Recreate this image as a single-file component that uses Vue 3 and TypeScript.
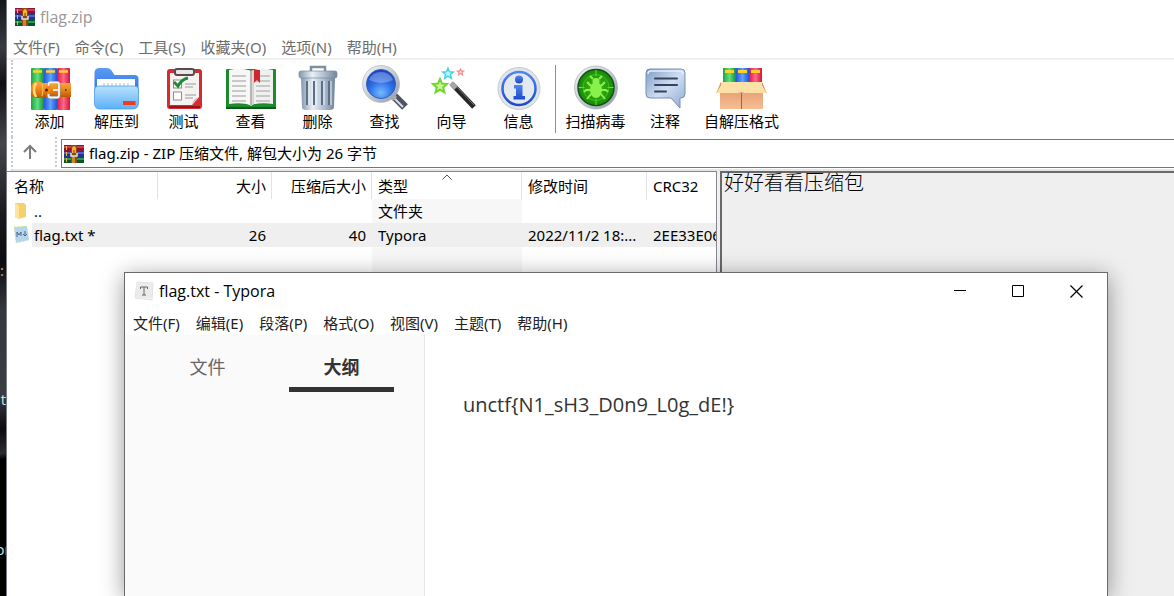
<script setup lang="ts">
interface Tool {
  id: string
  label: string
  size?: string
}

const archiveMenus: string[] = ['文件(F)', '命令(C)', '工具(S)', '收藏夹(O)', '选项(N)', '帮助(H)']
const editorMenus: string[] = ['文件(F)', '编辑(E)', '段落(P)', '格式(O)', '视图(V)', '主题(T)', '帮助(H)']

const tools: Tool[] = [
  { id: 'add', label: '添加' },
  { id: 'extract', label: '解压到' },
  { id: 'test', label: '测试' },
  { id: 'view', label: '查看' },
  { id: 'delete', label: '删除' },
  { id: 'find', label: '查找' },
  { id: 'wizard', label: '向导' },
  { id: 'info', label: '信息' },
  { id: 'scan', label: '扫描病毒', size: 'wide' },
  { id: 'comment', label: '注释', size: 'narrow' },
  { id: 'sfx', label: '自解压格式', size: 'widest' },
]

const address = 'flag.zip - ZIP 压缩文件, 解包大小为 26 字节'
const star = 'M0 -7 L2 -2.4 L7 -2 L3.2 1.4 L4.4 6.4 L0 3.6 L-4.4 6.4 L-3.2 1.4 L-7 -2 L-2 -2.4 Z'
</script>

<template>
  <div class="desktop">
    <svg class="defs" width="0" height="0" aria-hidden="true">
      <defs>
        <linearGradient id="gGreen"><stop offset="0" stop-color="#1fa345" /><stop offset=".5" stop-color="#5fe07c" /><stop offset="1" stop-color="#149038" /></linearGradient>
        <linearGradient id="gBlue"><stop offset="0" stop-color="#2559d8" /><stop offset=".5" stop-color="#5fa2ff" /><stop offset="1" stop-color="#1f55d6" /></linearGradient>
        <linearGradient id="gRed"><stop offset="0" stop-color="#e01540" /><stop offset=".5" stop-color="#ff6a86" /><stop offset="1" stop-color="#d9123a" /></linearGradient>
        <linearGradient id="gBelt" x2="0" y2="1"><stop offset="0" stop-color="#f7a93c" /><stop offset=".5" stop-color="#ec8416" /><stop offset="1" stop-color="#b85a06" /></linearGradient>
        <linearGradient id="gFolderBack" x2="0" y2="1"><stop offset="0" stop-color="#5b9cf5" /><stop offset="1" stop-color="#2f6fe0" /></linearGradient>
        <linearGradient id="gFolder" x2="0" y2="1"><stop offset="0" stop-color="#b8e2fd" /><stop offset="1" stop-color="#5cb0f7" /></linearGradient>
        <linearGradient id="gPage"><stop offset="0" stop-color="#fff" /><stop offset="1" stop-color="#cfcfcf" /></linearGradient>
        <linearGradient id="gSteel"><stop offset="0" stop-color="#8496ae" /><stop offset=".35" stop-color="#e8eff7" /><stop offset=".7" stop-color="#a9b8cb" /><stop offset="1" stop-color="#71839b" /></linearGradient>
        <linearGradient id="gRing" x2="1" y2="1"><stop offset="0" stop-color="#f4f7fa" /><stop offset=".5" stop-color="#c3cbd5" /><stop offset="1" stop-color="#8d98a6" /></linearGradient>
        <radialGradient id="gLens" cx=".5" cy=".8" r=".8"><stop offset="0" stop-color="#72bcff" /><stop offset=".5" stop-color="#2e6fe6" /><stop offset="1" stop-color="#183db8" /></radialGradient>
        <linearGradient id="gInfo" x2="0" y2="1"><stop offset="0" stop-color="#4f86f2" /><stop offset="1" stop-color="#1f49cc" /></linearGradient>
        <linearGradient id="gBubble" x2="1" y2="1"><stop offset="0" stop-color="#7f9cc6" /><stop offset=".5" stop-color="#cfdef3" /><stop offset="1" stop-color="#8fa9cf" /></linearGradient>
        <linearGradient id="gBox" x2="0" y2="1"><stop offset="0" stop-color="#dc9468" /><stop offset="1" stop-color="#f8bd92" /></linearGradient>
        <radialGradient id="gScan"><stop offset="0" stop-color="#3cbf12" /><stop offset="1" stop-color="#188a08" /></radialGradient>
        <symbol id="archive" viewBox="0 0 20 18">
          <rect width="20" height="6" fill="#8e1238" /><rect y="1" width="20" height="2" fill="#c93a60" />
          <rect y="6" width="20" height="6" fill="#22358f" /><rect y="7" width="20" height="2" fill="#4f63c8" />
          <rect y="12" width="20" height="6" fill="#0a5428" /><rect y="13" width="20" height="2" fill="#2b9950" />
          <path d="M2.500 1v4M2.500 7v4M2.500 13v4" stroke="#efb72f" />
          <rect x="7" width="6" height="18" fill="#8f4a14" /><rect x="8" y="11" width="3" height="7" fill="#cf8430" />
          <path d="M8 3q2-4 4 0v5H8z" fill="#f6b42c" />
          <path d="M7 8v3h6V8" fill="none" stroke="#e3e0d8" stroke-width="1.500" />
          <path d="M10 5v5" stroke="#7a4210" />
        </symbol>
      </defs>
    </svg>

    <aside class="wallpaper">
      <span class="frag amber">:</span>
      <span class="frag">t</span>
      <span class="frag low">or</span>
    </aside>

    <main class="archive">
      <header class="titlebar">
        <svg class="app-icon" width="20" height="18"><use href="#archive" /></svg>
        <span>flag.zip</span>
      </header>

      <nav class="menubar">
        <button v-for="m in archiveMenus" :key="m" type="button">{{ m }}</button>
      </nav>

      <div class="toolbar">
        <button v-for="t in tools" :key="t.id" type="button" class="tool" :class="[t.size, t.id]">
          <svg width="52" height="46" viewBox="-1 -1 52 46" aria-hidden="true">
            <g v-if="t.id === 'add'">
              <rect x="6" y="2" width="13" height="42" rx="1" fill="url(#gGreen)" />
              <rect x="19" y="2" width="13" height="42" rx="1" fill="url(#gBlue)" />
              <rect x="32" y="2" width="13" height="42" rx="1" fill="url(#gRed)" />
              <path d="M8 5.500h9M21 5.500h9M34 5.500h9" stroke="#ffd02e" stroke-width="2.500" />
              <rect x="16" y="17" width="30" height="14" fill="url(#gBelt)" />
              <path d="M10 16h6q3 0 3 8t-3 8h-6q-4-1-4-8t4-8z" fill="url(#gBelt)" />
              <path d="M11 17q-4 7 0 14" fill="none" stroke="#ffd977" stroke-width="2.500" />
              <path d="M17 18q2 6 0 12" fill="none" stroke="#ffc45a" stroke-width="1" />
              <rect x="23.500" y="16.500" width="10.500" height="15" rx="2" fill="none" stroke="#8b8f96" stroke-width="3" />
              <rect x="23.500" y="16.500" width="10.500" height="15" rx="2" fill="none" stroke="#f3f3f3" stroke-width="1.800" />
              <rect x="22" y="20" width="3" height="8" fill="#ec8416" />
              <path d="M28 24h6" stroke="#f3f3f3" stroke-width="1.800" /><circle cx="21.500" cy="24" r="1.500" fill="#4a2502" />
              <path d="M40 24h1.500" stroke="#6b3503" stroke-width="2" />
            </g>
            <g v-else-if="t.id === 'extract'">
              <path d="M2.500 22V7q0-5 5-5h7q4 0 6 4l2 3h20q4 0 4 4v14H2.500z" fill="url(#gFolderBack)" />
              <path d="M5 13h38v12H5z" fill="#fff" />
              <path d="M12 17v4M16 17v4M20 17v4M24 17v4M28 17v4M32 17v4M36 17v4" stroke="#b9c3cf" />
              <path d="M2.500 24q0-4 4-4h36q4 0 4 4v13q0 6-6 6H8q-5.500 0-5.500-6z" fill="url(#gFolder)" stroke="#4d9cee" stroke-width=".8" />
              <rect x="31" y="35" width="12.500" height="4" fill="#ee3b22" />
            </g>
            <g v-else-if="t.id === 'test'">
              <rect x="8" y="3" width="35" height="40" rx="3" fill="#d52c32" />
              <path d="M10 41h31" stroke="#951318" stroke-width="2" />
              <path d="M11 7h29v24l-7 8H11z" fill="#f4f3f1" /><path d="M33 39q1-7 7-8z" fill="#c9c6c2" />
              <rect x="16" y="3" width="19" height="6" rx="2" fill="#e8e8e8" stroke="#5b4a4c" stroke-width="2" />
              <rect x="14.500" y="14" width="8" height="8" fill="#fff" stroke="#8d8d8d" />
              <rect x="14.500" y="26" width="8" height="8" fill="#fff" stroke="#8d8d8d" />
              <path d="M26 18h11M26 21h8M26 29h11M26 32h8" stroke="#a5979a" />
              <path d="M15 16l4 4q4-7 10-8" fill="none" stroke="#23873a" stroke-width="3" />
            </g>
            <g v-else-if="t.id === 'view'">
              <rect x="0" y="3" width="50" height="40" rx="1" fill="#1d8a2d" />
              <path d="M0 42h50" stroke="#0c5d1a" stroke-width="2" />
              <path d="M3 4q12-3 22 1v34q-10-3-22-1z" fill="#f7f7f7" />
              <path d="M25 5q10-4 22-1v34q-12-2-22 1z" fill="#f0f0f0" />
              <path d="M22 4l3 1 3-1v34l-3 2-3-2z" fill="url(#gPage)" />
              <path d="M25 5v34" stroke="#858585" />
              <path d="M6 10h14M6 15h14M6 20h14M6 25h14M6 30h14M6 35h14M30 10h14M30 15h14M30 20h14M30 25h14M30 30h14M30 35h14" stroke="#bbb" stroke-width="1.500" />
              <path d="M28 4h6v13l-3-3-3 3z" fill="#cf2730" />
            </g>
            <g v-else-if="t.id === 'delete'">
              <path d="M18 6V1h14v5" fill="none" stroke="#8090a4" stroke-width="2.500" />
              <path d="M8 12h34l-1 29q0 3-4 3H13q-4 0-4-3z" fill="url(#gSteel)" />
              <path d="M14 15v24M21 15v24M29 15v24M36 15v24" stroke="#5d6f87" stroke-width="2" />
              <path d="M16 15v24M23 15v24M31 15v24M38 15v24" stroke="#eef4fb" />
              <rect x="6" y="5" width="38" height="7" rx="2" fill="url(#gSteel)" stroke="#788aa1" stroke-width=".7" />
            </g>
            <g v-else-if="t.id === 'find'">
              <path d="M34 30L45 41" stroke="#4e535f" stroke-width="8" /><path d="M34 32l9 9" stroke="#d9dde5" stroke-width="2" />
              <path d="M31 29l4 4" stroke="#9da5b1" stroke-width="6" />
              <circle cx="21" cy="18" r="18.500" fill="url(#gRing)" stroke="#aeb7c2" stroke-width=".7" />
              <circle cx="21" cy="18" r="14.500" fill="url(#gLens)" stroke="#345cc0" />
              <path d="M9 14Q12 6 21 6t12 8Q21 20 9 14z" fill="#fff" opacity=".28" />
            </g>
            <g v-else-if="t.id === 'wizard'">
              <path d="M25 18L47 41" stroke="#272727" stroke-width="5" /><path d="M26 17l21 22" stroke="#777" />
              <path d="M24 17l5 5" stroke="#a6a6a6" stroke-width="5" />
              <path :d="star" transform="translate(13 20)" fill="#c5f59a" stroke="#73d62d" stroke-width="2" />
              <path :d="star" transform="translate(21 7.500) scale(.75)" fill="#c4f7ff" stroke="#43d1ec" stroke-width="2" />
              <path :d="star" transform="translate(33.500 6) scale(.45)" fill="#ffdada" stroke="#f58a8a" stroke-width="2.500" />
            </g>
            <g v-else-if="t.id === 'info'">
              <circle cx="25" cy="22.500" r="21" fill="#dfe4ea" stroke="#c3cad2" />
              <circle cx="25" cy="22.500" r="16.500" fill="#e4e9f0" stroke="url(#gInfo)" stroke-width="2.500" />
              <circle cx="25" cy="13.500" r="4" fill="url(#gInfo)" />
              <path d="M20 19h8.500v11H31v3.500H19.500V30H22v-7.500h-2z" fill="url(#gInfo)" />
            </g>
            <g v-else-if="t.id === 'scan'">
              <circle cx="25" cy="21.500" r="21.500" fill="url(#gRing)" stroke="#9ba6a4" stroke-width=".6" />
              <circle cx="25" cy="21.500" r="18" fill="url(#gScan)" stroke="#174e15" stroke-width="1.500" />
              <path d="M25 4v6M25 33v6M7.500 21.500h6M36.500 21.500h6" stroke="#66df3c" />
              <circle cx="25" cy="21.500" r="13" fill="none" stroke="#52c82d" stroke-width=".7" />
              <ellipse cx="25" cy="24" rx="6" ry="8" fill="#8af04c" /><circle cx="25" cy="15.500" r="3.500" fill="#8af04c" />
              <path d="M22 13l-3-3M28 13l3-3M20 20l-4-4M30 20l4-4M19 24h-4l-2 2M31 24h4l2 2M20 28l-4 5M30 28l4 5" fill="none" stroke="#8af04c" stroke-width="2" />
            </g>
            <g v-else-if="t.id === 'comment'">
              <path d="M10 3h31q4 0 4 4v21q0 4-4 4h-1v10L31 32H10q-4 0-4-4V7q0-4 4-4z" fill="url(#gBubble)" stroke="#7890b4" />
              <path d="M8 8q0-3 3-3h29q3 0 3 3" fill="none" stroke="#e6effb" stroke-width="1.500" />
              <path d="M15 12.500h22M15 19h22M15 25.500h11" stroke="#35435c" stroke-width="2" stroke-linecap="round" />
            </g>
            <g v-else>
              <rect x="6" y="2" width="13" height="18" fill="url(#gGreen)" />
              <rect x="19" y="2" width="13" height="18" fill="url(#gBlue)" />
              <rect x="32" y="2" width="13" height="18" fill="url(#gRed)" />
              <path d="M8 5.500h9M21 5.500h9M34 5.500h9" stroke="#ffd02e" stroke-width="3" />
              <path d="M3 17h43v26H3z" fill="url(#gBox)" />
              <path d="M24.500 27v16" stroke="#a8643a" />
              <path d="M4 16h41l5 11H28l-3.500-1-3.500 1H-1z" fill="#fbe0a8" />
              <path d="M4 16v3l-5 9zM45 16v3l5 9z" fill="#d08a5c" />
            </g>
          </svg>
          <span>{{ t.label }}</span>
        </button>
      </div>

      <div class="pathbar">
        <button type="button" class="up" aria-label="上一级">
          <svg width="16" height="16" viewBox="0 0 16 16"><path d="M8 15V2M2 8l6-6 6 6" fill="none" stroke="#7c7c7c" stroke-width="2" /></svg>
        </button>
        <label class="address">
          <svg width="20" height="18" aria-hidden="true"><use href="#archive" /></svg>
          <input type="text" :value="address" aria-label="路径" />
        </label>
      </div>

      <div class="panes">
        <section class="files">
          <table>
            <colgroup>
              <col class="c-name" /><col class="c-size" /><col class="c-packed" /><col class="c-type" /><col class="c-date" /><col />
            </colgroup>
            <thead>
              <tr>
                <th>名称</th>
                <th class="num">大小</th>
                <th class="num">压缩后大小</th>
                <th class="sorted">
                  类型
                  <svg class="caret" width="10" height="6" viewBox="0 0 10 6"><path d="M.5 5.500L5 1l4.500 4.500" fill="none" stroke="#555" /></svg>
                </th>
                <th>修改时间</th>
                <th class="last latin">CRC32</th>
              </tr>
            </thead>
            <tbody>
              <tr>
                <td class="name">
                  <div class="entry">
                    <svg width="16" height="18" viewBox="0 0 16 18"><path d="M1 1h9l2 2v12l-8 2-3-2z" fill="#f6d06c" /><path d="M1 1l4 3v13l-4-2z" fill="#ffe6a0" /></svg>
                    <span>..</span>
                  </div>
                </td>
                <td></td><td></td><td class="type">文件夹</td><td></td><td></td>
              </tr>
              <tr class="selected latin">
                <td class="name">
                  <div class="entry">
                    <svg width="16" height="18" viewBox="0 0 16 18"><path d="M0 1l13-1 2 14-13 3z" fill="#b4d6ef" /><path d="M0 1l13-1 2 14-13 3z" fill="none" stroke="#d6e84a" stroke-dasharray="1 3" /><path d="M3 11V6l2 3 2-3v4M11 5v5M9 8l2 2 2-2" fill="none" stroke="#486b88" /></svg>
                    <span>flag.txt *</span>
                  </div>
                </td>
                <td class="num">26</td><td class="num">40</td><td>Typora</td><td>2022/11/2 18:...</td><td>2EE33E06</td>
              </tr>
              <tr class="rest"><td></td><td></td><td></td><td class="type"></td><td></td><td></td></tr>
            </tbody>
          </table>
        </section>
        <section class="note">好好看看压缩包</section>
      </div>
    </main>

    <section class="editor">
      <header class="editor-title">
        <svg width="20" height="20" viewBox="0 0 20 20" aria-hidden="true">
          <path d="M3 1l16 1-1 17-17-2z" fill="#f5f5f5" stroke="#e2e2e2" /><rect x="2" y="2" width="16" height="15" fill="#ebebeb" />
          <path d="M6.500 8V6h7v2M10 6v8M8 14h4" fill="none" stroke="#666" />
        </svg>
        <span class="editor-name">flag.txt - Typora</span>
        <button type="button" aria-label="最小化"><svg width="13" height="13"><path d="M0 5.500h12" stroke="#000" /></svg></button>
        <button type="button" aria-label="最大化"><svg width="13" height="13"><path d="M.5 .5h11v11H.5z" fill="none" stroke="#000" /></svg></button>
        <button type="button" aria-label="关闭"><svg width="13" height="13"><path d="M.5 .5l12 12M12.500 .5l-12 12" stroke="#000" stroke-width="1.200" /></svg></button>
      </header>
      <nav class="menubar editor-menu">
        <button v-for="m in editorMenus" :key="m" type="button">{{ m }}</button>
      </nav>
      <div class="editor-body">
        <aside class="sidebar">
          <button type="button" class="tab">文件</button>
          <button type="button" class="tab active">大纲</button>
        </aside>
        <article class="document"><p>unctf{N1_sH3_D0n9_L0g_dE!}</p></article>
      </div>
    </section>
  </div>
</template>

<style>
body {
  margin: 0;
}
</style>

<style scoped>
* {
  box-sizing: border-box;
}
.desktop {
  position: relative;
  display: flex;
  height: 100vh;
  overflow: hidden;
  font: 15px/20px "Open Sans", "Noto Sans CJK SC", sans-serif;
  color: #000;
}
button,
input {
  font: inherit;
  color: inherit;
  border: 0;
  padding: 0;
  background: none;
}
svg {
  display: block;
  flex: none;
}
.defs {
  position: absolute;
}
.wallpaper {
  flex: 0 0 7px;
  display: flex;
  flex-direction: column;
  overflow: hidden;
  padding-top: 260px;
  border-right: 1px solid #777a80;
  background: linear-gradient(170deg, #15161b 0, #3a3b42 8%, #101014 14%, #45464c 24%, #1a1a1e 36%, #0c0c10 44%, #37383f 52%, #3c3d43 66%, #0b0b0d 72%, #2c2d31 76%, #000 77%);
}
.frag {
  flex: none;
  display: flex;
  justify-content: flex-end;
  height: 150px;
  color: #bfe6f2;
}
.frag.amber {
  justify-content: flex-start;
  height: 129px;
  color: #d9a77c;
}
.frag.low {
  justify-content: center;
}
.archive {
  flex: 1;
  min-width: 0;
  display: flex;
  flex-direction: column;
  background: #fff;
}
.titlebar {
  display: flex;
  align-items: center;
  gap: 5px;
  height: 34px;
  padding-left: 8px;
  color: #999;
  font-size: 16px;
}
.menubar {
  display: flex;
  gap: 15px;
  height: 26px;
  padding: 2px 0 0 6px;
  border-bottom: 2px solid #f0f0f0;
  color: #6d6d6d;
  font-family: "Noto Sans", "Noto Sans CJK SC", sans-serif;
  white-space: nowrap;
}
.toolbar {
  display: flex;
  height: 77px;
  padding: 5px 0 0 3px;
  margin-left: 4px;
  border-left: 2px dotted #c8c8c8;
}
.tool {
  flex: 0 0 67px;
  display: flex;
  flex-direction: column;
  align-items: center;
  white-space: nowrap;
}
.tool.wide {
  flex-basis: 80px;
  margin-left: 3px;
}
.tool.narrow {
  flex-basis: 60px;
}
.tool.widest {
  flex-basis: 93px;
}
.tool.scan {
  height: 68px;
  border-left: 1px solid #909090;
}
.pathbar {
  display: flex;
  height: 34px;
  padding-bottom: 2px;
  margin-left: 4px;
  border-left: 2px dotted #c8c8c8;
  border-bottom: 2px solid #e6e6e6;
}
.up {
  display: flex;
  align-items: center;
  justify-content: center;
  width: 44px;
  padding-right: 8px;
  border-right: 2px dotted #c8c8c8;
}
.address {
  flex: 1;
  display: flex;
  align-items: center;
  gap: 5px;
  height: 29px;
  margin: 2px 0 0 4px;
  padding-left: 2px;
  border: 1px solid #777;
  border-right: 0;
  font-family: "Noto Sans", "Noto Sans CJK SC", sans-serif;
}
.address input {
  flex: 1;
  height: 25px;
  padding-bottom: 2px;
}
.panes {
  flex: 1;
  display: flex;
  min-height: 0;
  background: #f0f0f0;
}
.files {
  flex: 0 0 710px;
  overflow: hidden;
  background: #fff;
  border-top: 1px solid #828790;
  border-right: 1px solid #828790;
}
table {
  width: 100%;
  height: 100%;
  table-layout: fixed;
  border-collapse: separate;
  border-spacing: 0;
}
.c-name {
  width: 151px;
}
.c-size {
  width: 114px;
}
.c-packed {
  width: 100px;
}
.c-type {
  width: 150px;
}
.c-date {
  width: 125px;
}
th,
td {
  height: 24px;
  padding: 0 5px 0 6px;
  text-align: left;
  font-weight: 400;
  white-space: nowrap;
  overflow: hidden;
}
th:first-child,
td:first-child {
  padding-left: 7px;
}
td.num {
  padding-right: 6px;
}
td:last-child {
  padding-right: 0;
}
th {
  height: 27px;
  border-right: 1px solid #e2e2e2;
}
th.last {
  border-right: 0;
}
.latin {
  font-family: "Noto Sans", sans-serif;
}
.num {
  text-align: right;
}
.sorted {
  position: relative;
}
.caret {
  position: absolute;
  top: 2px;
  left: 70px;
}
.type {
  background: #f7f7f7;
}
.rest td {
  height: auto;
}
.selected td {
  background: #efefef;
}
.selected td.name {
  background: linear-gradient(90deg, #fff 25px, #efefef 25px);
}
.entry {
  display: flex;
  align-items: center;
  gap: 4px;
}
.note {
  flex: 1;
  margin-left: 3px;
  border-top: 2px solid #696969;
  border-left: 2px solid #696969;
  padding-left: 2px;
  background: #efefef;
  font-family: "Noto Sans CJK SC", sans-serif;
  font-size: 20px;
  line-height: 18px;
  font-weight: 300;
}
.editor {
  position: absolute;
  top: 272px;
  left: 124px;
  right: 66px;
  bottom: 0;
  display: flex;
  flex-direction: column;
  background: #fff;
  border: 1px solid #6a6a6a;
  border-bottom: 0;
  box-shadow: 0 4px 22px rgba(0, 0, 0, 0.4);
}
.editor-title {
  display: flex;
  align-items: center;
  height: 36px;
  padding: 0 2px 0 9px;
}
.editor-name {
  flex: 1;
  padding-left: 5px;
  font-size: 16px;
}
.editor-title button {
  display: grid;
  place-items: center;
  width: 58px;
  height: 36px;
}
.editor-menu {
  height: 26px;
  gap: 16px;
  padding-left: 8px;
  border: 0;
  color: #222;
}
.editor-body {
  flex: 1;
  display: flex;
}
.sidebar {
  flex: 0 0 300px;
  display: flex;
  justify-content: center;
  gap: 29px;
  align-items: flex-start;
  padding-top: 9px;
  background: #fafafa;
  border-right: 1px solid #e6e6e6;
}
.tab {
  width: 105px;
  height: 48px;
  padding-top: 2px;
  border-bottom: 5px solid transparent;
  color: #666;
  font-size: 18px;
}
.tab.active {
  border-color: #333;
  color: #333;
  font-weight: 700;
}
.document {
  flex: 1;
  padding: 54px 38px 0;
  color: #333;
  font-size: 20px;
  line-height: 32px;
}
.document p {
  margin: 0;
}
</style>
